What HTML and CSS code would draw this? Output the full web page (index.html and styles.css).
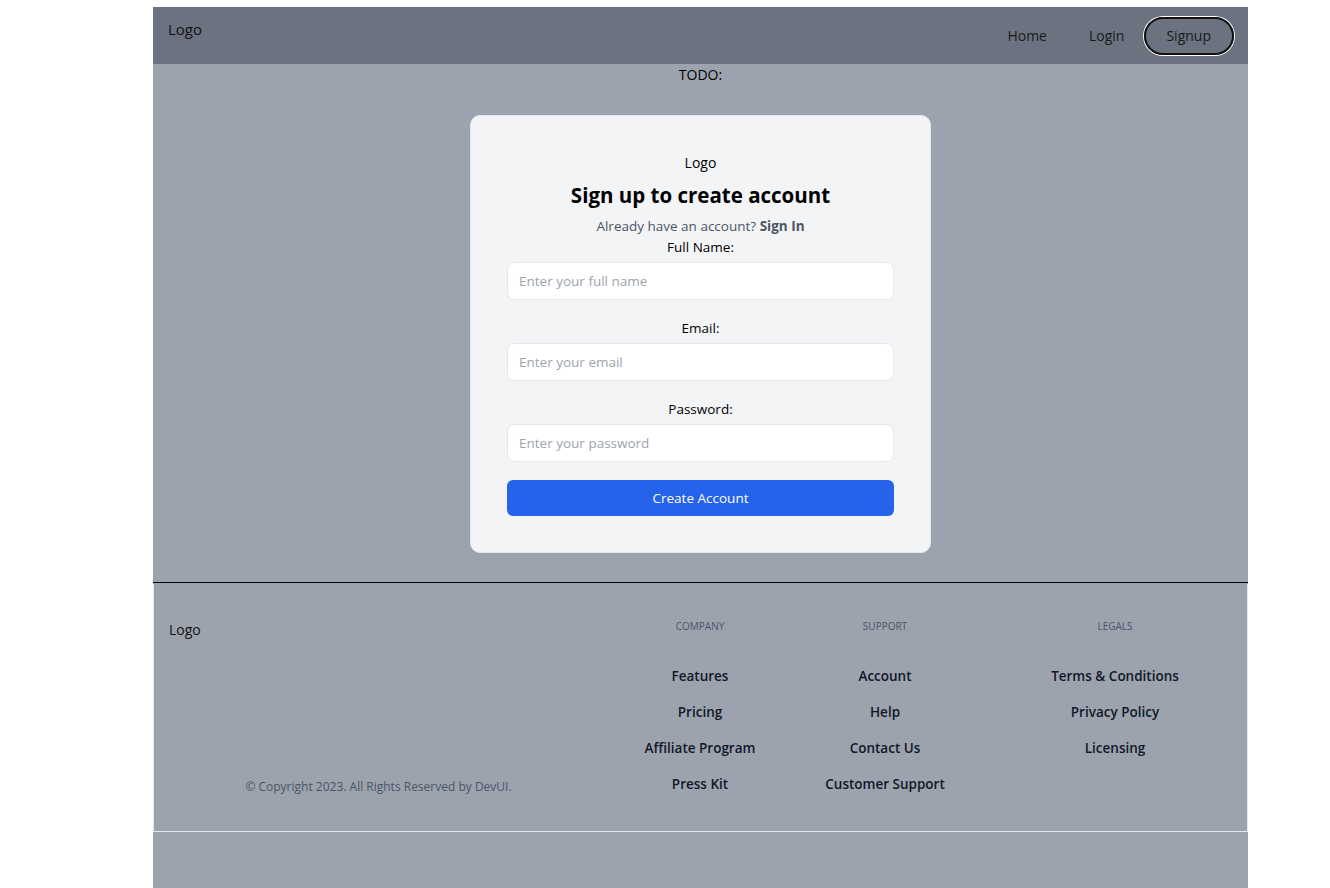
FILE: index.html
```html
<!DOCTYPE html>
<html lang="en">
<head>
<meta charset="utf-8">
<title>Sign up</title>
<link rel="stylesheet" href="styles.css">
</head>
<body>
<div class="page">
  <header class="topbar">
    <div class="brand">Logo</div>
    <nav class="nav">
      <a class="nav-link" href="#">Home</a>
      <a class="nav-link" href="#">Login</a>
      <a class="nav-link nav-signup" href="#">Signup</a>
    </nav>
  </header>

  <main class="main">
    <div class="todo">TODO:</div>
    <div class="card">
      <div class="card-logo">Logo</div>
      <h1 class="card-title">Sign up to create account</h1>
      <p class="card-sub">Already have an account? <a href="#" class="signin">Sign In</a></p>
      <form class="form">
        <label class="field">
          <span class="field-label">Full Name:</span>
          <input class="input" type="text" placeholder="Enter your full name">
        </label>
        <label class="field">
          <span class="field-label">Email:</span>
          <input class="input" type="email" placeholder="Enter your email">
        </label>
        <label class="field">
          <span class="field-label">Password:</span>
          <input class="input" type="password" placeholder="Enter your password">
        </label>
        <button class="submit" type="button">Create Account</button>
      </form>
    </div>
  </main>

  <footer class="footer">
    <div class="footer-left">
      <div class="footer-logo">Logo</div>
      <p class="copyright">© Copyright 2023. All Rights Reserved by DevUI.</p>
    </div>
    <div class="footer-cols">
      <div class="fcol">
        <h3 class="fhead">Company</h3>
        <ul class="flinks">
          <li><a href="#">Features</a></li>
          <li><a href="#">Pricing</a></li>
          <li><a href="#">Affiliate Program</a></li>
          <li><a href="#">Press Kit</a></li>
        </ul>
      </div>
      <div class="fcol">
        <h3 class="fhead">Support</h3>
        <ul class="flinks">
          <li><a href="#">Account</a></li>
          <li><a href="#">Help</a></li>
          <li><a href="#">Contact Us</a></li>
          <li><a href="#">Customer Support</a></li>
        </ul>
      </div>
      <div class="fcol fcol-legal">
        <h3 class="fhead">Legals</h3>
        <ul class="flinks">
          <li><a href="#">Terms &amp; Conditions</a></li>
          <li><a href="#">Privacy Policy</a></li>
          <li><a href="#">Licensing</a></li>
        </ul>
      </div>
    </div>
  </footer>
</div>
</body>
</html>
```

FILE: styles.css
```css
* { box-sizing: border-box; }

html, body {
  margin: 0;
  padding: 0;
  background: #ffffff;
  overflow: hidden;
}

body {
  font-family: "Open Sans", "Noto Sans", "Liberation Sans", sans-serif;
  color: #000;
}

.page {
  margin: 7px 0 0 153px;
  width: 1095px;
  min-height: 100vh;
  background: #9ca3af;
}

/* header */
.topbar {
  display: flex;
  justify-content: space-between;
  align-items: flex-start;
  height: 57px;
  padding: 10px 14px 0 15px;
  background: #6b7280;
}

.brand {
  font-size: 15px;
  line-height: 24px;
  color: #111;
}

.nav {
  display: flex;
  align-items: center;
  height: 38px;
}

.nav-link {
  display: flex;
  align-items: center;
  height: 38px;
  padding: 0 21px 1px;
  font-size: 14px;
  color: #1a1a1a;
  text-decoration: none;
}

.nav-signup {
  margin-left: -1px;
  padding: 0 21px 1px 20px;
  border: 2px solid #111;
  border-radius: 19px;
  box-shadow: 0 0 0 1px #ffffff;
}

/* main */
.main {
  display: flex;
  flex-direction: column;
  align-items: center;
  padding: 0 0 29px;
  border-bottom: 1px solid #000;
}

.todo {
  height: 22px;
  font-size: 14px;
  line-height: 22px;
}

.card {
  margin-top: 29px;
  width: 461px;
  padding: 35px 36px 36px;
  background: #f3f4f6;
  border: 1px solid #e5e7eb;
  border-radius: 10px;
  text-align: center;
}

.card-logo {
  font-size: 14px;
  line-height: 24px;
}

.card-title {
  margin: 5px 0 0;
  font-size: 20.5px;
  line-height: 31px;
  font-weight: 700;
}

.card-sub {
  margin: 5px 0 0;
  font-size: 13.5px;
  line-height: 20px;
  color: #4b5563;
}

.signin {
  color: #4b5563;
  font-weight: 700;
  text-decoration: none;
}

.form {
  display: flex;
  flex-direction: column;
  gap: 18px;
}

.field {
  display: flex;
  flex-direction: column;
  align-items: center;
  gap: 5px;
}

.field-label {
  font-size: 13.5px;
  line-height: 20px;
  color: #000;
}

.input {
  width: 100%;
  height: 38px;
  padding: 0 11px;
  border: 1px solid #e5e7eb;
  border-radius: 7px;
  background: #fff;
  font-family: inherit;
  font-size: 13.5px;
  color: #111;
  outline: none;
}

.input::placeholder {
  color: #9ca3af;
}

.submit {
  height: 36px;
  width: 100%;
  border: 0;
  border-radius: 6px;
  background: #2563eb;
  color: #fff;
  font-family: inherit;
  font-size: 13.5px;
}

.form .field:first-child { margin-top: 1px; }

/* footer */
.footer {
  display: flex;
  height: 248px;
  padding: 34px 0 36px;
  border-left: 1px solid #e5e7eb;
  border-right: 1px solid #e5e7eb;
  border-bottom: 1px solid #e5e7eb;
  margin-top: 1px;
}

.footer-left {
  width: 449px;
  display: flex;
  flex-direction: column;
  justify-content: space-between;
}

.footer-logo {
  padding-left: 15px;
  font-size: 14px;
  line-height: 24px;
  color: #111;
}

.copyright {
  margin: 0;
  text-align: center;
  font-size: 12px;
  line-height: 16px;
  color: #4b5563;
}

.footer-cols {
  margin-left: 7px;
  display: grid;
  grid-template-columns: 180px 190px 250px;
}

.fcol {
  text-align: center;
}

.fcol-legal {
  margin-left: 20px;
}

.fhead {
  margin: 0;
  font-size: 10px;
  line-height: 16px;
  font-weight: 400;
  text-transform: uppercase;
  color: #4b5563;
}

.flinks {
  list-style: none;
  margin: 32px 0 0;
  padding: 0;
  display: flex;
  flex-direction: column;
  gap: 16px;
}

.flinks a {
  display: block;
  font-size: 13.5px;
  line-height: 20px;
  font-weight: 600;
  color: #111827;
  text-decoration: none;
}
```
